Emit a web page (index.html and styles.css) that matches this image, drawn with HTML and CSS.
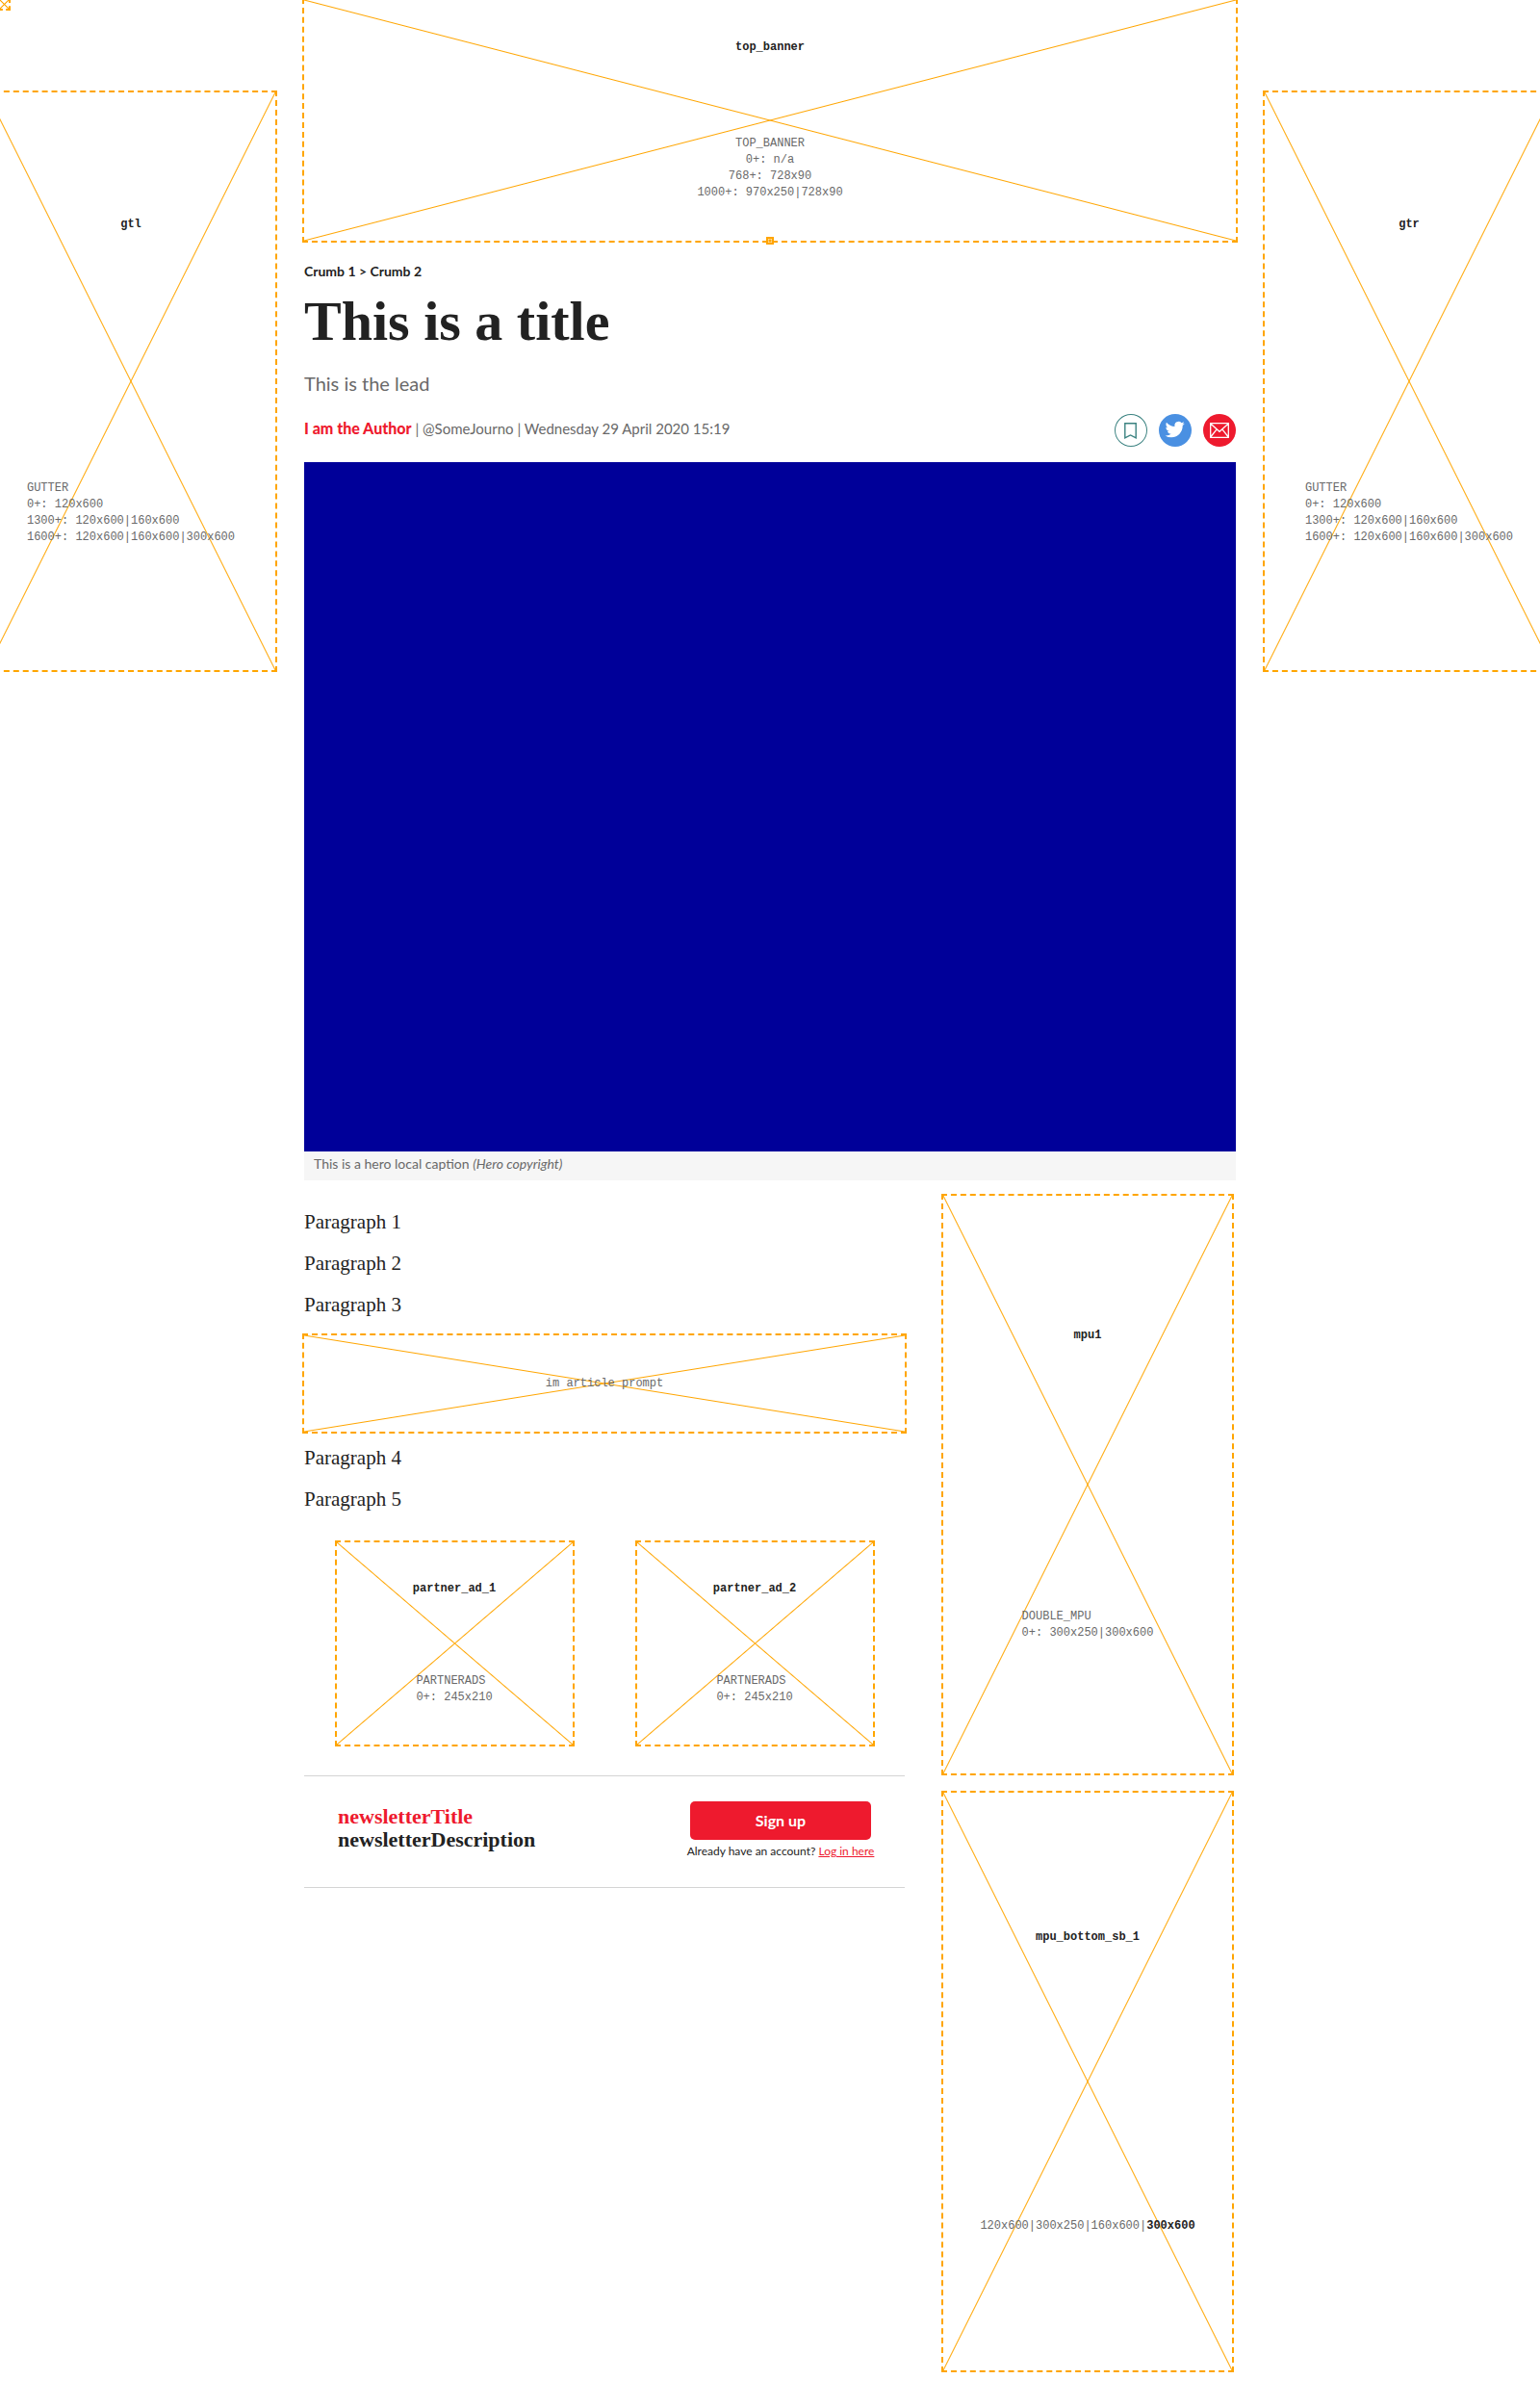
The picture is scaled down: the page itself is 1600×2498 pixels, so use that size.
FILE: index.html
```html
<!DOCTYPE html>
<html lang="en">
<head>
<meta charset="utf-8">
<meta name="viewport" content="width=device-width, initial-scale=1">
<title>This is a title</title>
<link rel="stylesheet" href="styles.css">
</head>
<body>
<div class="ad ad-pixel"></div>
<div class="page">
  <aside class="ad ad-gutter ad-gutter-left">
    <strong class="ad-name">gtl</strong>
    <p class="ad-sizes">GUTTER<br>0+: 120x600<br>1300+: 120x600|160x600<br>1600+: 120x600|160x600|300x600</p>
  </aside>

  <main class="content">
    <div class="ad ad-banner">
      <strong class="ad-name">top_banner</strong>
      <p class="ad-sizes">TOP_BANNER<br>0+: n/a<br>768+: 728x90<br>1000+: 970x250|728x90</p>
      <span class="ad-marker"></span>
    </div>

    <nav class="crumbs" aria-label="Breadcrumb"><a href="#">Crumb 1</a> &gt; <a href="#">Crumb 2</a></nav>
    <h1 class="title">This is a title</h1>
    <p class="lead">This is the lead</p>

    <div class="byline">
      <p class="byline-text"><a class="author" href="#">I am the Author</a> | <a href="#">@SomeJourno</a> | <time datetime="2020-04-29T15:19">Wednesday 29 April 2020 15:19</time></p>
      <div class="share">
        <button class="share-item share-save" type="button" aria-label="Save">
          <svg width="34" height="34" viewBox="0 0 34 34" fill="none" stroke="#3a8280"><path d="M10.8 9.7h11.4v15.2L16.5 22l-5.7 2.9z" stroke-width="1.4"/></svg>
        </button>
        <a class="share-item share-twitter" href="#" aria-label="Share on Twitter">
          <svg width="34" height="34" viewBox="0 0 34 34"><path fill="#fff" transform="translate(6.6 6) scale(.84)" d="M23.95 4.57a10 10 0 0 1-2.82.78 4.96 4.96 0 0 0 2.16-2.73c-.95.56-2 .96-3.13 1.18a4.92 4.92 0 0 0-8.38 4.49C7.69 8.1 4.07 6.13 1.64 3.16a4.82 4.82 0 0 0-.66 2.48c0 1.71.87 3.21 2.19 4.1a4.9 4.9 0 0 1-2.23-.62v.06a4.92 4.92 0 0 0 3.95 4.83 5 5 0 0 1-2.21.08 4.94 4.94 0 0 0 4.6 3.42A9.87 9.87 0 0 1 0 19.54a13.94 13.94 0 0 0 7.55 2.21c9.05 0 14-7.5 14-13.98 0-.21 0-.42-.02-.63a9.94 9.94 0 0 0 2.46-2.55z"/></svg>
        </a>
        <a class="share-item share-mail" href="#" aria-label="Share by email">
          <svg width="34" height="34" viewBox="0 0 34 34" fill="none" stroke="#fff" stroke-width="1.3"><path d="M7.7 9.7h18.6v14.6H7.7zM7.7 10l9.3 8.3 9.3-8.3M7.7 24l6.5-8.2M26.3 24l-6.5-8.2"/></svg>
        </a>
      </div>
    </div>

    <figure class="hero">
      <div class="hero-image"></div>
      <figcaption class="hero-caption">This is a hero local caption <em>(Hero copyright)</em></figcaption>
    </figure>

    <div class="columns">
      <article class="article">
        <p>Paragraph 1</p>
        <p>Paragraph 2</p>
        <p>Paragraph 3</p>
        <div class="ad ad-prompt"><span class="ad-sizes">im article prompt</span></div>
        <p>Paragraph 4</p>
        <p>Paragraph 5</p>

        <div class="partners">
          <div class="ad ad-partner">
            <strong class="ad-name">partner_ad_1</strong>
            <span class="ad-sizes">PARTNERADS<br>0+: 245x210</span>
          </div>
          <div class="ad ad-partner">
            <strong class="ad-name">partner_ad_2</strong>
            <span class="ad-sizes">PARTNERADS<br>0+: 245x210</span>
          </div>
        </div>

        <section class="newsletter">
          <h2 class="newsletter-text"><span class="newsletter-title">newsletterTitle</span>newsletterDescription</h2>
          <div class="signup">
            <button class="signup-button" type="button">Sign up</button>
            <div class="signup-note"><span>Already have an account? <a href="#">Log in here</a></span></div>
          </div>
        </section>
      </article>

      <aside class="sidebar">
        <div class="ad ad-mpu">
          <strong class="ad-name">mpu1</strong>
          <p class="ad-sizes">DOUBLE_MPU<br>0+: 300x250|300x600</p>
        </div>
        <div class="ad ad-mpu">
          <strong class="ad-name">mpu_bottom_sb_1</strong>
          <p class="ad-sizes">120x600|300x250|160x600|<b>300x600</b></p>
        </div>
      </aside>
    </div>
  </main>

  <aside class="ad ad-gutter ad-gutter-right">
    <strong class="ad-name">gtr</strong>
    <p class="ad-sizes">GUTTER<br>0+: 120x600<br>1300+: 120x600|160x600<br>1600+: 120x600|160x600|300x600</p>
  </aside>
</div>
</body>
</html>
```
FILE: styles.css
```css
:root {
  --ink: #222;
  --grey: #696969;
  --red: #ee1a2e;
  --sans: Lato, "Open Sans", sans-serif;
  --serif: "Liberation Serif", "Times New Roman", serif;
  --mono: "Liberation Mono", "Courier New", monospace;
}

* { box-sizing: border-box; }

body {
  margin: 0;
  color: var(--ink);
  background: #fff;
  font-family: var(--sans);
  overflow-x: hidden;
}

p, h1, h2, figure { margin: 0; }
a { color: inherit; text-decoration: none; }

.page {
  display: grid;
  grid-template-columns: minmax(0, 1fr) minmax(0, 968px) minmax(0, 1fr);
  column-gap: 30px;
  align-items: start;
  overflow: hidden;
  padding-bottom: 36px;
}

/* Ad slots */
.ad {
  display: flex;
  flex-direction: column;
  align-items: center;
  justify-content: space-around;
  outline: 2px dashed orange;
  background:
    linear-gradient(to top right, transparent calc(50% - 1px), orange, transparent calc(50% + 1px)),
    linear-gradient(to bottom right, transparent calc(50% - 1px), orange, transparent calc(50% + 1px));
  font: 12px/17px var(--mono);
}
.ad-name { font-weight: 700; }
.ad-sizes { color: var(--grey); }
.ad-sizes b { color: var(--ink); }

.ad-pixel {
  position: absolute;
  top: 0;
  left: 0;
  width: 9px;
  height: 9px;
}
.ad-gutter { width: 300px; height: 600px; margin-top: 96px; }
.ad-gutter-left { justify-self: end; }
.ad-gutter-right { justify-self: start; }
.ad-banner { position: relative; height: 250px; text-align: center; }
.ad-marker {
  position: absolute;
  bottom: -4px;
  left: calc(50% - 4px);
  width: 8px;
  height: 8px;
  border: 2px solid orange;
  background: radial-gradient(circle, orange 1px, #ffe4b3 2px, orange 3px);
}
.ad-prompt { height: 100px; margin: 18px 0 13px; }
.ad-partner { width: 245px; height: 210px; }
.ad-mpu { height: 600px; }

/* Article head */
.crumbs {
  margin-top: 22px;
  font-size: 14px;
  line-height: 20px;
  font-weight: 700;
}
.title {
  margin-top: 10px;
  font: 700 58px/64px var(--serif);
}
.lead {
  margin-top: 18px;
  color: var(--grey);
  font-size: 20px;
  line-height: 28px;
}
.byline {
  display: flex;
  justify-content: space-between;
  align-items: flex-start;
  margin-top: 18px;
}
.byline-text { color: var(--grey); font-size: 15px; line-height: 30px; }
.author { color: var(--red); font-size: 16px; font-weight: 900; }

.share { display: flex; gap: 12px; }
.share-item {
  width: 34px;
  height: 34px;
  padding: 0;
  border: 0;
  border-radius: 50%;
  overflow: hidden;
}
.share-item svg { display: block; }
.share-save { background: #fff; box-shadow: inset 0 0 0 1px #3a8280; }
.share-twitter { background: #4a90e2; }
.share-mail { background: var(--red); }

.hero { margin-top: 16px; }
.hero-image { aspect-ratio: 242 / 179; background: #009; }
.hero-caption {
  padding: 3px 10px 7px;
  background: #f6f6f6;
  color: var(--grey);
  font-size: 14px;
  line-height: 20px;
}

/* Body */
.columns {
  display: grid;
  grid-template-columns: minmax(0, 1fr) 300px;
  column-gap: 40px;
  padding-right: 4px;
}
.article { padding-top: 29px; }
.article > p { font: 21px/28px var(--serif); }
.article > p + p { margin-top: 15px; }
.sidebar {
  display: flex;
  flex-direction: column;
  gap: 20px;
  padding-top: 16px;
}
.partners {
  display: grid;
  grid-template-columns: 1fr 1fr;
  justify-items: center;
  margin-top: 31px;
}

.newsletter {
  display: flex;
  justify-content: space-between;
  align-items: flex-start;
  margin-top: 32px;
  padding: 26px 35px 29px;
  border: solid #d4d4d4;
  border-width: 1px 0;
}
.newsletter-text {
  padding-top: 4px;
  font: 700 22px/24px var(--serif);
}
.newsletter-title { display: block; color: var(--red); }
.signup { width: 188px; }
.signup-button {
  display: block;
  width: 100%;
  height: 40px;
  padding: 0;
  border: 0;
  border-radius: 5px;
  background: var(--red);
  color: #fff;
  font: 700 16px/20px var(--sans);
}
.signup-note {
  display: flex;
  justify-content: center;
  padding-top: 4px;
  font-size: 12px;
  line-height: 16px;
  white-space: nowrap;
}
.signup-note a { color: var(--red); text-decoration: underline; }
```
